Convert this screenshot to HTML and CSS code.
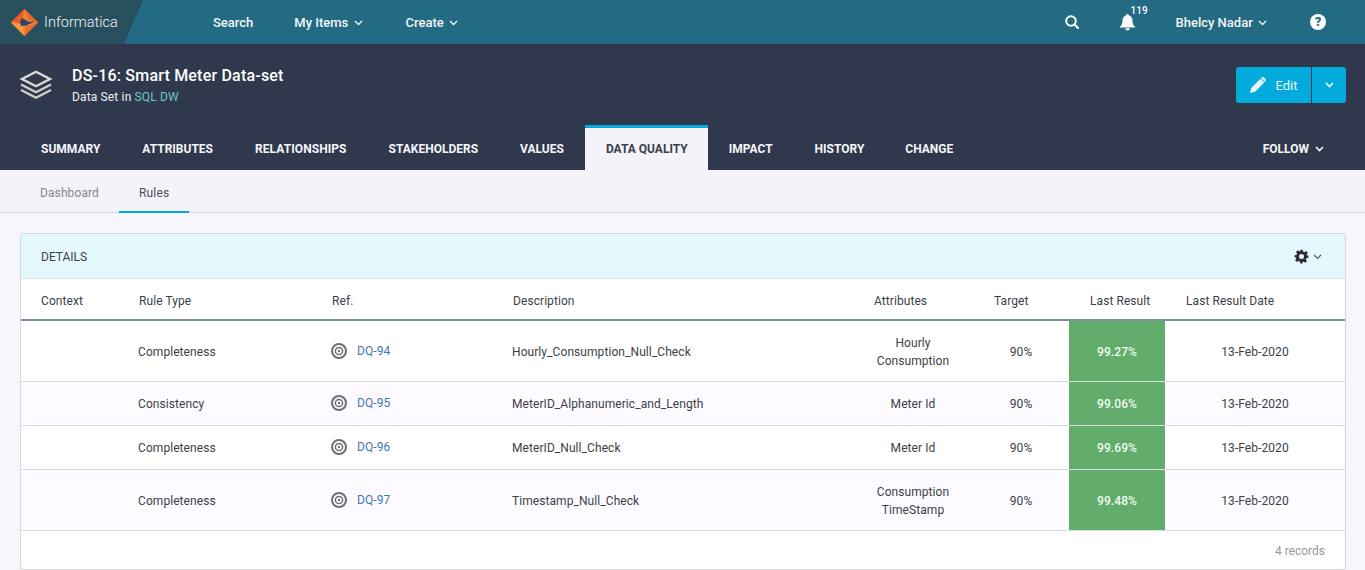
FILE: index.html
```html
<!DOCTYPE html>
<html lang="en">
<head>
<meta charset="utf-8">
<title>DS-16: Smart Meter Data-set</title>
<link rel="stylesheet" href="styles.css">
</head>
<body>
<header class="topbar">
  <div class="brand">
    <svg class="logo" width="27" height="27" viewBox="0 0 27 27">
      <polygon points="13.500,0 27,13.500 13.500,27 0,13.500" fill="#f47f2c"/>
      <polygon points="13.500,0 0,13.500 10,13.500" fill="#ee5a24"/>
      <polygon points="13.500,0 18,11 27,13.500" fill="#e9692a"/>
      <polygon points="0,13.500 12,16 13.500,27" fill="#f59a3d"/>
      <polygon points="13.500,27 27,13.500 15,18" fill="#ea6a28"/>
      <polygon points="11,9 18,13 24,12.500 15,16.500 10,17 9,13" fill="#2b4475"/>
    </svg>
    <span class="brand-name">Informatica</span>
  </div>
  <nav class="mainnav">
    <a class="navitem nav-search">Search</a>
    <a class="navitem nav-items">My Items <svg class="chev" width="9" height="6" viewBox="0 0 9 6"><path d="M1 1l3.500 3.500L8 1" fill="none" stroke="currentColor" stroke-width="1.400"/></svg></a>
    <a class="navitem nav-create">Create <svg class="chev" width="9" height="6" viewBox="0 0 9 6"><path d="M1 1l3.500 3.500L8 1" fill="none" stroke="currentColor" stroke-width="1.400"/></svg></a>
  </nav>
  <div class="usernav">
    <svg class="search-icon" width="14" height="14" viewBox="0 0 14 14"><circle cx="6" cy="6" r="4.800" fill="none" stroke="#fff" stroke-width="2"/><path d="M9.500 9.500l3.500 3.500" stroke="#fff" stroke-width="2.400" stroke-linecap="round"/></svg>
    <div class="bell">
      <svg width="17" height="18" viewBox="0 0 18 20"><path d="M9 1a1.300 1.300 0 0 1 1.300 1.500C13 3.200 14.600 5.500 14.600 8.500c0 3.500.9 5 2.900 6.800.3.300.1.700-.3.700H.8c-.4 0-.6-.4-.3-.7C2.500 13.500 3.400 12 3.400 8.500c0-3 1.600-5.300 4.300-6A1.300 1.300 0 0 1 9 1z" fill="#fff"/><path d="M6.500 17h5a2.500 2.500 0 0 1-5 0z" fill="#fff"/></svg>
      <span class="badge">119</span>
    </div>
    <a class="navitem user">Bhelcy Nadar <svg class="chev" width="9" height="6" viewBox="0 0 9 6"><path d="M1 1l3.500 3.500L8 1" fill="none" stroke="currentColor" stroke-width="1.400"/></svg></a>
    <span class="help">?</span>
  </div>
</header>

<section class="objhead">
  <div class="objrow">
    <svg class="stack" width="34" height="30" viewBox="0 0 34 30">
      <path d="M17 1.800L31 9 17 16.200 3 9z" fill="none" stroke="#dedbd8" stroke-width="2.400"/>
      <path d="M2 14.500L17 22.200l15-7.700" fill="none" stroke="#d2cfcc" stroke-width="2.400"/>
      <path d="M2 20L17 27.700 32 20" fill="none" stroke="#d2cfcc" stroke-width="2.400"/>
    </svg>
    <div class="objtitle">
      <h1>DS-16: Smart Meter Data-set</h1>
      <p>Data Set in <a>SQL DW</a></p>
    </div>
    <div class="editgroup">
      <button class="btn btn-edit">
        <svg width="18" height="18" viewBox="0 0 18 18"><path d="M1 17l1.200-5L11.500 2.700l3.800 3.800L6 15.800z M12.700 1.500c.7-.7 1.700-.7 2.400 0l1.400 1.400c.7.700.7 1.700 0 2.400l-.6.600-3.800-3.800z" fill="#e6f7fc"/></svg>
        Edit
      </button>
      <button class="btn btn-caret"><svg width="9" height="6" viewBox="0 0 9 6"><path d="M1 1l3.500 3.500L8 1" fill="none" stroke="#fff" stroke-width="1.600"/></svg></button>
    </div>
  </div>
  <nav class="tabs">
    <a class="tab">Summary</a>
    <a class="tab">Attributes</a>
    <a class="tab tab-wide">Relationships</a>
    <a class="tab">Stakeholders</a>
    <a class="tab">Values</a>
    <a class="tab tab-active">Data Quality</a>
    <a class="tab">Impact</a>
    <a class="tab tab-history">History</a>
    <a class="tab">Change</a>
    <a class="tab tab-follow">Follow <svg class="chev" width="9" height="6" viewBox="0 0 9 6"><path d="M1 1l3.500 3.500L8 1" fill="none" stroke="currentColor" stroke-width="1.600"/></svg></a>
  </nav>
</section>

<nav class="subtabs">
  <a class="subtab subtab-dash">Dashboard</a>
  <a class="subtab subtab-active">Rules</a>
</nav>

<main class="content">
  <section class="card">
    <div class="cardhead">
      <span>DETAILS</span>
      <span class="cardtools">
        <svg width="15" height="15" viewBox="0 0 24 24"><path fill="#2f2f33" fill-rule="evenodd" d="M10 1h4l.7 3.200 1.900.8 2.800-1.800 2.800 2.800-1.800 2.800.8 1.900L23 10v4l-3.200.7-.8 1.900 1.800 2.800-2.800 2.800-2.800-1.800-1.900.8L14 23h-4l-.7-3.200-1.900-.8-2.800 1.800-2.800-2.800 1.800-2.800-.8-1.900L1 14v-4l3.200-.7.8-1.900-1.800-2.800 2.800-2.800 2.800 1.800 1.900-.8zM12 8a4 4 0 1 0 0 8 4 4 0 0 0 0-8z"/></svg>
        <svg class="chev" width="9" height="6" viewBox="0 0 9 6"><path d="M1 1l3.500 3.500L8 1" fill="none" stroke="#555" stroke-width="1.100"/></svg>
      </span>
    </div>
    <table class="rules">
      <colgroup>
        <col class="c-context"><col class="c-type"><col class="c-ref"><col class="c-desc"><col class="c-attr"><col class="c-target"><col class="c-result"><col class="c-date">
      </colgroup>
      <thead>
        <tr>
          <th class="th-first">Context</th><th>Rule Type</th><th>Ref.</th><th>Description</th><th>Attributes</th><th>Target</th><th>Last Result</th><th>Last Result Date</th>
        </tr>
      </thead>
      <tbody>
        <tr class="row-tall">
          <td></td><td>Completeness</td>
          <td><span class="refcell"><svg class="target" width="16" height="16" viewBox="0 0 16 16"><circle cx="8" cy="8" r="7" fill="none" stroke="#6f6f72" stroke-width="2"/><circle cx="8" cy="8" r="3.600" fill="none" stroke="#6f6f72" stroke-width="1.500"/><circle cx="8" cy="8" r="1.200" fill="#6f6f72"/></svg><a>DQ-94</a></span></td>
          <td>Hourly_Consumption_Null_Check</td>
          <td class="center">Hourly<br>Consumption</td><td class="center">90%</td><td class="score">99.27%</td><td class="center">13-Feb-2020</td>
        </tr>
        <tr class="row-alt">
          <td></td><td>Consistency</td>
          <td><span class="refcell"><svg class="target" width="16" height="16" viewBox="0 0 16 16"><circle cx="8" cy="8" r="7" fill="none" stroke="#6f6f72" stroke-width="2"/><circle cx="8" cy="8" r="3.600" fill="none" stroke="#6f6f72" stroke-width="1.500"/><circle cx="8" cy="8" r="1.200" fill="#6f6f72"/></svg><a>DQ-95</a></span></td>
          <td>MeterID_Alphanumeric_and_Length</td>
          <td class="center">Meter Id</td><td class="center">90%</td><td class="score">99.06%</td><td class="center">13-Feb-2020</td>
        </tr>
        <tr>
          <td></td><td>Completeness</td>
          <td><span class="refcell"><svg class="target" width="16" height="16" viewBox="0 0 16 16"><circle cx="8" cy="8" r="7" fill="none" stroke="#6f6f72" stroke-width="2"/><circle cx="8" cy="8" r="3.600" fill="none" stroke="#6f6f72" stroke-width="1.500"/><circle cx="8" cy="8" r="1.200" fill="#6f6f72"/></svg><a>DQ-96</a></span></td>
          <td>MeterID_Null_Check</td>
          <td class="center">Meter Id</td><td class="center">90%</td><td class="score">99.69%</td><td class="center">13-Feb-2020</td>
        </tr>
        <tr class="row-tall row-alt">
          <td></td><td>Completeness</td>
          <td><span class="refcell"><svg class="target" width="16" height="16" viewBox="0 0 16 16"><circle cx="8" cy="8" r="7" fill="none" stroke="#6f6f72" stroke-width="2"/><circle cx="8" cy="8" r="3.600" fill="none" stroke="#6f6f72" stroke-width="1.500"/><circle cx="8" cy="8" r="1.200" fill="#6f6f72"/></svg><a>DQ-97</a></span></td>
          <td>Timestamp_Null_Check</td>
          <td class="center">Consumption<br>TimeStamp</td><td class="center">90%</td><td class="score">99.48%</td><td class="center">13-Feb-2020</td>
        </tr>
      </tbody>
    </table>
    <div class="cardfoot">4 records</div>
  </section>
</main>
</body>
</html>
```
FILE: styles.css
```css
* { box-sizing: border-box; }
html, body { margin: 0; padding: 0; }
body {
  height: 570px;
  overflow: hidden;
  font-family: Roboto, "Liberation Sans", sans-serif;
  font-size: 12px;
  color: #3c3f46;
  background: #f8f6fd;
}
a { color: inherit; text-decoration: none; }

.topbar {
  height: 44px;
  display: flex;
  align-items: center;
  background: #226b82;
  color: #fff;
}
.brand {
  width: 143px;
  height: 44px;
  flex: none;
  display: flex;
  align-items: center;
  gap: 6px;
  padding-left: 11px;
  background: #284f5e;
  clip-path: polygon(0 0, 100% 0, 124px 100%, 0 100%);
}
.brand-name { font-size: 14.6px; font-weight: 300; color: #f2f4f5; }
.logo { flex: none; }
.mainnav { display: flex; align-items: center; margin-left: 70px; }
.navitem { font-size: 13px; font-weight: 500; color: #f2f5f6; white-space: nowrap; }
.nav-search { margin-right: 41px; }
.nav-items { margin-right: 43px; }
.chev { margin-left: 2px; vertical-align: 1px; }
.usernav { margin-left: auto; display: flex; align-items: center; }
.search-icon { margin-right: 40px; }
.bell { position: relative; width: 17px; height: 18px; margin-right: 40px; }
.badge {
  position: absolute;
  left: 12px;
  top: -8px;
  font-size: 10px;
  font-weight: 500;
  line-height: 12px;
  color: #fff;
}
.user { margin-right: 43px; }
.help {
  width: 16px;
  height: 16px;
  margin-right: 39px;
  border-radius: 50%;
  background: #fff;
  color: #226b82;
  font-size: 13px;
  font-weight: 900;
  line-height: 16px;
  text-align: center;
}

.objhead { height: 126px; background: #2f384c; color: #fff; display: flex; flex-direction: column; }
.objrow { height: 81px; display: flex; align-items: flex-start; padding: 22px 19px 0 19px; }
.stack { flex: none; margin-top: 4px; }
.objtitle { margin-left: 19px; }
.objtitle h1 { margin: 0; font-size: 16px; line-height: 19px; font-weight: 500; letter-spacing: .2px; }
.objtitle p { margin: 5px 0 0; font-size: 12px; line-height: 15px; letter-spacing: .15px; color: #eef0f3; }
.objtitle p a { color: #6fc4cf; }
.editgroup { margin-left: auto; margin-top: 1px; display: flex; gap: 1px; }
.btn {
  height: 36px;
  border: 0;
  padding: 0;
  background: #03abdc;
  color: #eaf9fd;
  font-family: inherit;
  font-size: 13px;
  display: flex;
  align-items: center;
  justify-content: center;
}
.btn-edit { width: 75px; gap: 8px; border-radius: 3px 0 0 3px; }
.btn-caret { width: 34px; border-radius: 0 3px 3px 0; }

.tabs { flex: 1; display: flex; align-items: stretch; padding-left: 20px; }
.tab {
  display: flex;
  align-items: center;
  padding: 3px 21px 0;
  font-size: 12px;
  font-weight: 700;
  text-transform: uppercase;
  color: #f4f6f8;
  white-space: nowrap;
}
.tab-wide { letter-spacing: .08px; }
.tab-active { background: #f5f3fa; color: #3a3f4b; border-top: 3px solid #03abdc; padding: 0 20px 0 21px; }
.tab-history { padding-right: 20px; }
.tab-follow { margin-left: auto; margin-right: 20px; padding-right: 21px; gap: 4px; }

.subtabs { height: 43px; display: flex; padding-left: 20px; background: #f5f3fa; border-bottom: 1px solid #d7d5dc; }
.subtab { display: flex; align-items: center; padding: 4px 20px 0; margin-bottom: -1px; color: #85878e; border-bottom: 2px solid transparent; }
.subtab-dash { letter-spacing: .1px; }
.subtab-active { color: #4c4e57; letter-spacing: .2px; border-bottom-color: #03abdc; }

.content { padding: 20px 19px 0 20px; }
.card {
  height: 337px;
  background: #fff;
  border: 1px solid #d5d5da;
  border-radius: 3px;
  overflow: hidden;
}
.cardhead {
  height: 45px;
  display: flex;
  align-items: center;
  justify-content: space-between;
  padding: 1px 23px 0 20px;
  background: #e3f9fe;
  border-bottom: 1px solid #dcdfe3;
  color: #3c3f46;
}
.cardtools { display: flex; align-items: center; gap: 2px; }

.rules { width: 100%; table-layout: fixed; border-collapse: collapse; letter-spacing: .07px; }
.c-context { width: 97px; }
.c-type { width: 193px; }
.c-ref { width: 181px; }
.c-desc { width: 361px; }
.c-attr { width: 120px; }
.c-target { width: 96px; }
.c-result { width: 96px; }
.rules thead tr { height: 41px; border-bottom: 2px solid #7b8c9d; }
.rules th { padding: 3px 0 0 21px; text-align: left; font-weight: 400; color: #3c3f46; }
.rules th.th-first { padding-left: 20px; }
.rules tbody tr { height: 44px; border-bottom: 1px solid #dcdcdf; }
.rules tbody tr.row-tall { height: 61px; }
.rules tbody tr.row-alt { background: #fdfbff; }
.rules td { padding: 2px 0 0 20px; line-height: 18px; }
.rules td.center { padding: 2px 0 0; text-align: center; }
.rules td.score { padding: 2px 0 0; text-align: center; background: #62ad6b; color: #f0fbf2; font-weight: 500; }
.refcell { display: flex; align-items: center; gap: 10px; margin-top: -2px; }
.refcell a { color: #3f78b5; }
.target { flex: none; }

.cardfoot { padding: 13px 20px 0; text-align: right; color: #98999e; }
```
